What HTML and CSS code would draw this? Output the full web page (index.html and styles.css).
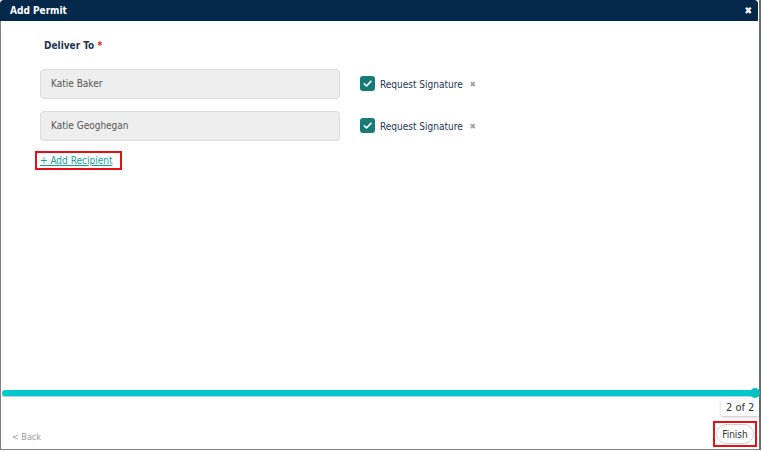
FILE: index.html
```html
<!DOCTYPE html>
<html lang="en">
<head>
    <meta charset="UTF-8">
    <meta name="viewport" content="width=device-width, initial-scale=1.0">
    <title>Add Permit</title>
    <link rel="stylesheet" href="styles.css">
</head>
<body>
    <div class="modal">
        <div class="modal-head">
            <span class="modal-title">Add Permit</span>
            <span class="close-btn">&#10006;</span>
        </div>
        <div class="modal-body">
            <div class="content">
                <div class="field-label">Deliver To <span class="required">*</span></div>

                <div class="recipient">
                    <div class="recipient-input">Katie Baker</div>
                    <label class="sign-option">
                        <span class="check">
                            <svg width="11" height="11" viewBox="0 0 12 12"><path d="M2.5 6.3l2.4 2.4 4.8-5" fill="none" stroke="#fff" stroke-width="1.8" stroke-linecap="round" stroke-linejoin="round"/></svg>
                        </span>
                        Request Signature
                    </label>
                    <span class="remove">&#10006;</span>
                </div>

                <div class="recipient">
                    <div class="recipient-input">Katie Geoghegan</div>
                    <label class="sign-option">
                        <span class="check">
                            <svg width="11" height="11" viewBox="0 0 12 12"><path d="M2.5 6.3l2.4 2.4 4.8-5" fill="none" stroke="#fff" stroke-width="1.8" stroke-linecap="round" stroke-linejoin="round"/></svg>
                        </span>
                        Request Signature
                    </label>
                    <span class="remove">&#10006;</span>
                </div>

                <div class="add-wrap marked">
                    <a href="#" class="add-link">+ Add Recipient</a>
                </div>
            </div>

            <div class="progress">
                <div class="progress-bar"></div>
                <span class="progress-knob"></span>
            </div>
            <div class="step-row">
                <span class="step-tip">2 of 2</span>
            </div>
            <div class="footer">
                <a href="#" class="back-link">&lt; Back</a>
                <div class="marked finish-wrap">
                    <button class="finish-btn">Finish</button>
                </div>
            </div>
        </div>
    </div>
</body>
</html>
```

FILE: styles.css
```css
/* Add Permit dialog */
body {
    margin: 0;
    background: #fff;
    font-family: "DejaVu Sans Condensed", "DejaVu Sans", sans-serif;
    font-size: 10px;
    color: #1d3557;
}

.modal {
    width: 759px;
    height: 450px;
    border-right: 2px solid #66706f;
    display: flex;
    flex-direction: column;
}

.modal-head {
    width: 758px;
    height: 21px;
    flex: none;
    background: #03284a;
    border-radius: 4px 4px 0 0;
    display: flex;
    align-items: center;
    justify-content: space-between;
    color: #fff;
    box-sizing: border-box;
    padding: 0 6px 0 10px;
}

.modal-title {
    font-weight: bold;
    font-size: 10px;
}

.close-btn {
    font-size: 10px;
    font-weight: bold;
}

.modal-body {
    flex: 1;
    border-left: 1px solid #808080;
    border-bottom: 1px solid #808080;
    display: flex;
    flex-direction: column;
}

.content {
    flex: 1;
    padding: 18px 0 0 39px;
}

.field-label {
    font-weight: bold;
    line-height: 14px;
    padding-left: 4px;
}

.required {
    color: #e8121b;
}

.recipient {
    display: flex;
    align-items: center;
    margin-top: 16px;
}

.recipient + .recipient {
    margin-top: 12px;
}

.recipient-input {
    width: 300px;
    height: 30px;
    box-sizing: border-box;
    background: #eeeeee;
    border: 1px solid #dcdcdc;
    border-radius: 4px;
    padding-left: 10px;
    line-height: 28px;
    color: #555;
}

.sign-option {
    display: flex;
    align-items: center;
    margin-left: 20px;
    gap: 5px;
    color: #1d3557;
}

.check {
    width: 15px;
    height: 15px;
    border-radius: 3px;
    background: #177a76;
    display: flex;
    align-items: center;
    justify-content: center;
    margin-top: -1px;
}

.remove {
    margin-left: 7px;
    font-size: 8px;
    font-weight: bold;
    color: #a0a0a0;
}

/* red outline around actions */
.marked {
    border: 2px solid #e3101a;
}

.add-wrap {
    display: inline-block;
    margin: 10px 0 0 -5px;
    width: 80px;
    height: 15px;
    padding-left: 3px;
    line-height: 15px;
}

.add-link {
    color: #189c9c;
    text-decoration: underline;
}

.progress {
    position: relative;
    margin: 0 2px 0 1px;
}

.progress-bar {
    height: 6px;
    background: #00c8cc;
    border-radius: 3px 0 0 3px;
    border-bottom: 1px solid #a9dcdc;
}

.progress-knob {
    position: absolute;
    right: -3px;
    top: -2px;
    width: 10px;
    height: 10px;
    border-radius: 50%;
    background: #00c0c4;
}

.step-row {
    display: flex;
    justify-content: flex-end;
    margin-top: 2px;
}

.step-tip {
    width: 33px;
    height: 17px;
    line-height: 17px;
    font-size: 11px;
    color: #333;
    background: #fff;
    box-shadow: 0 1px 3px rgba(0, 0, 0, 0.25);
    padding-left: 5px;
    border-radius: 2px 0 0 2px;
}

.footer {
    display: flex;
    justify-content: space-between;
    align-items: flex-end;
    margin-top: 5px;
    padding: 0 2px 2px 11px;
}

.back-link {
    font-size: 9px;
    color: #999;
    text-decoration: none;
    padding-bottom: 5px;
}

.finish-wrap {
    padding: 1px;
}

.finish-btn {
    display: block;
    width: 38px;
    height: 20px;
    border: 1px solid #cfcfcf;
    border-radius: 10px;
    background: #fff;
    font-family: inherit;
    font-size: 10px;
    color: #333;
    padding: 0;
}
```
